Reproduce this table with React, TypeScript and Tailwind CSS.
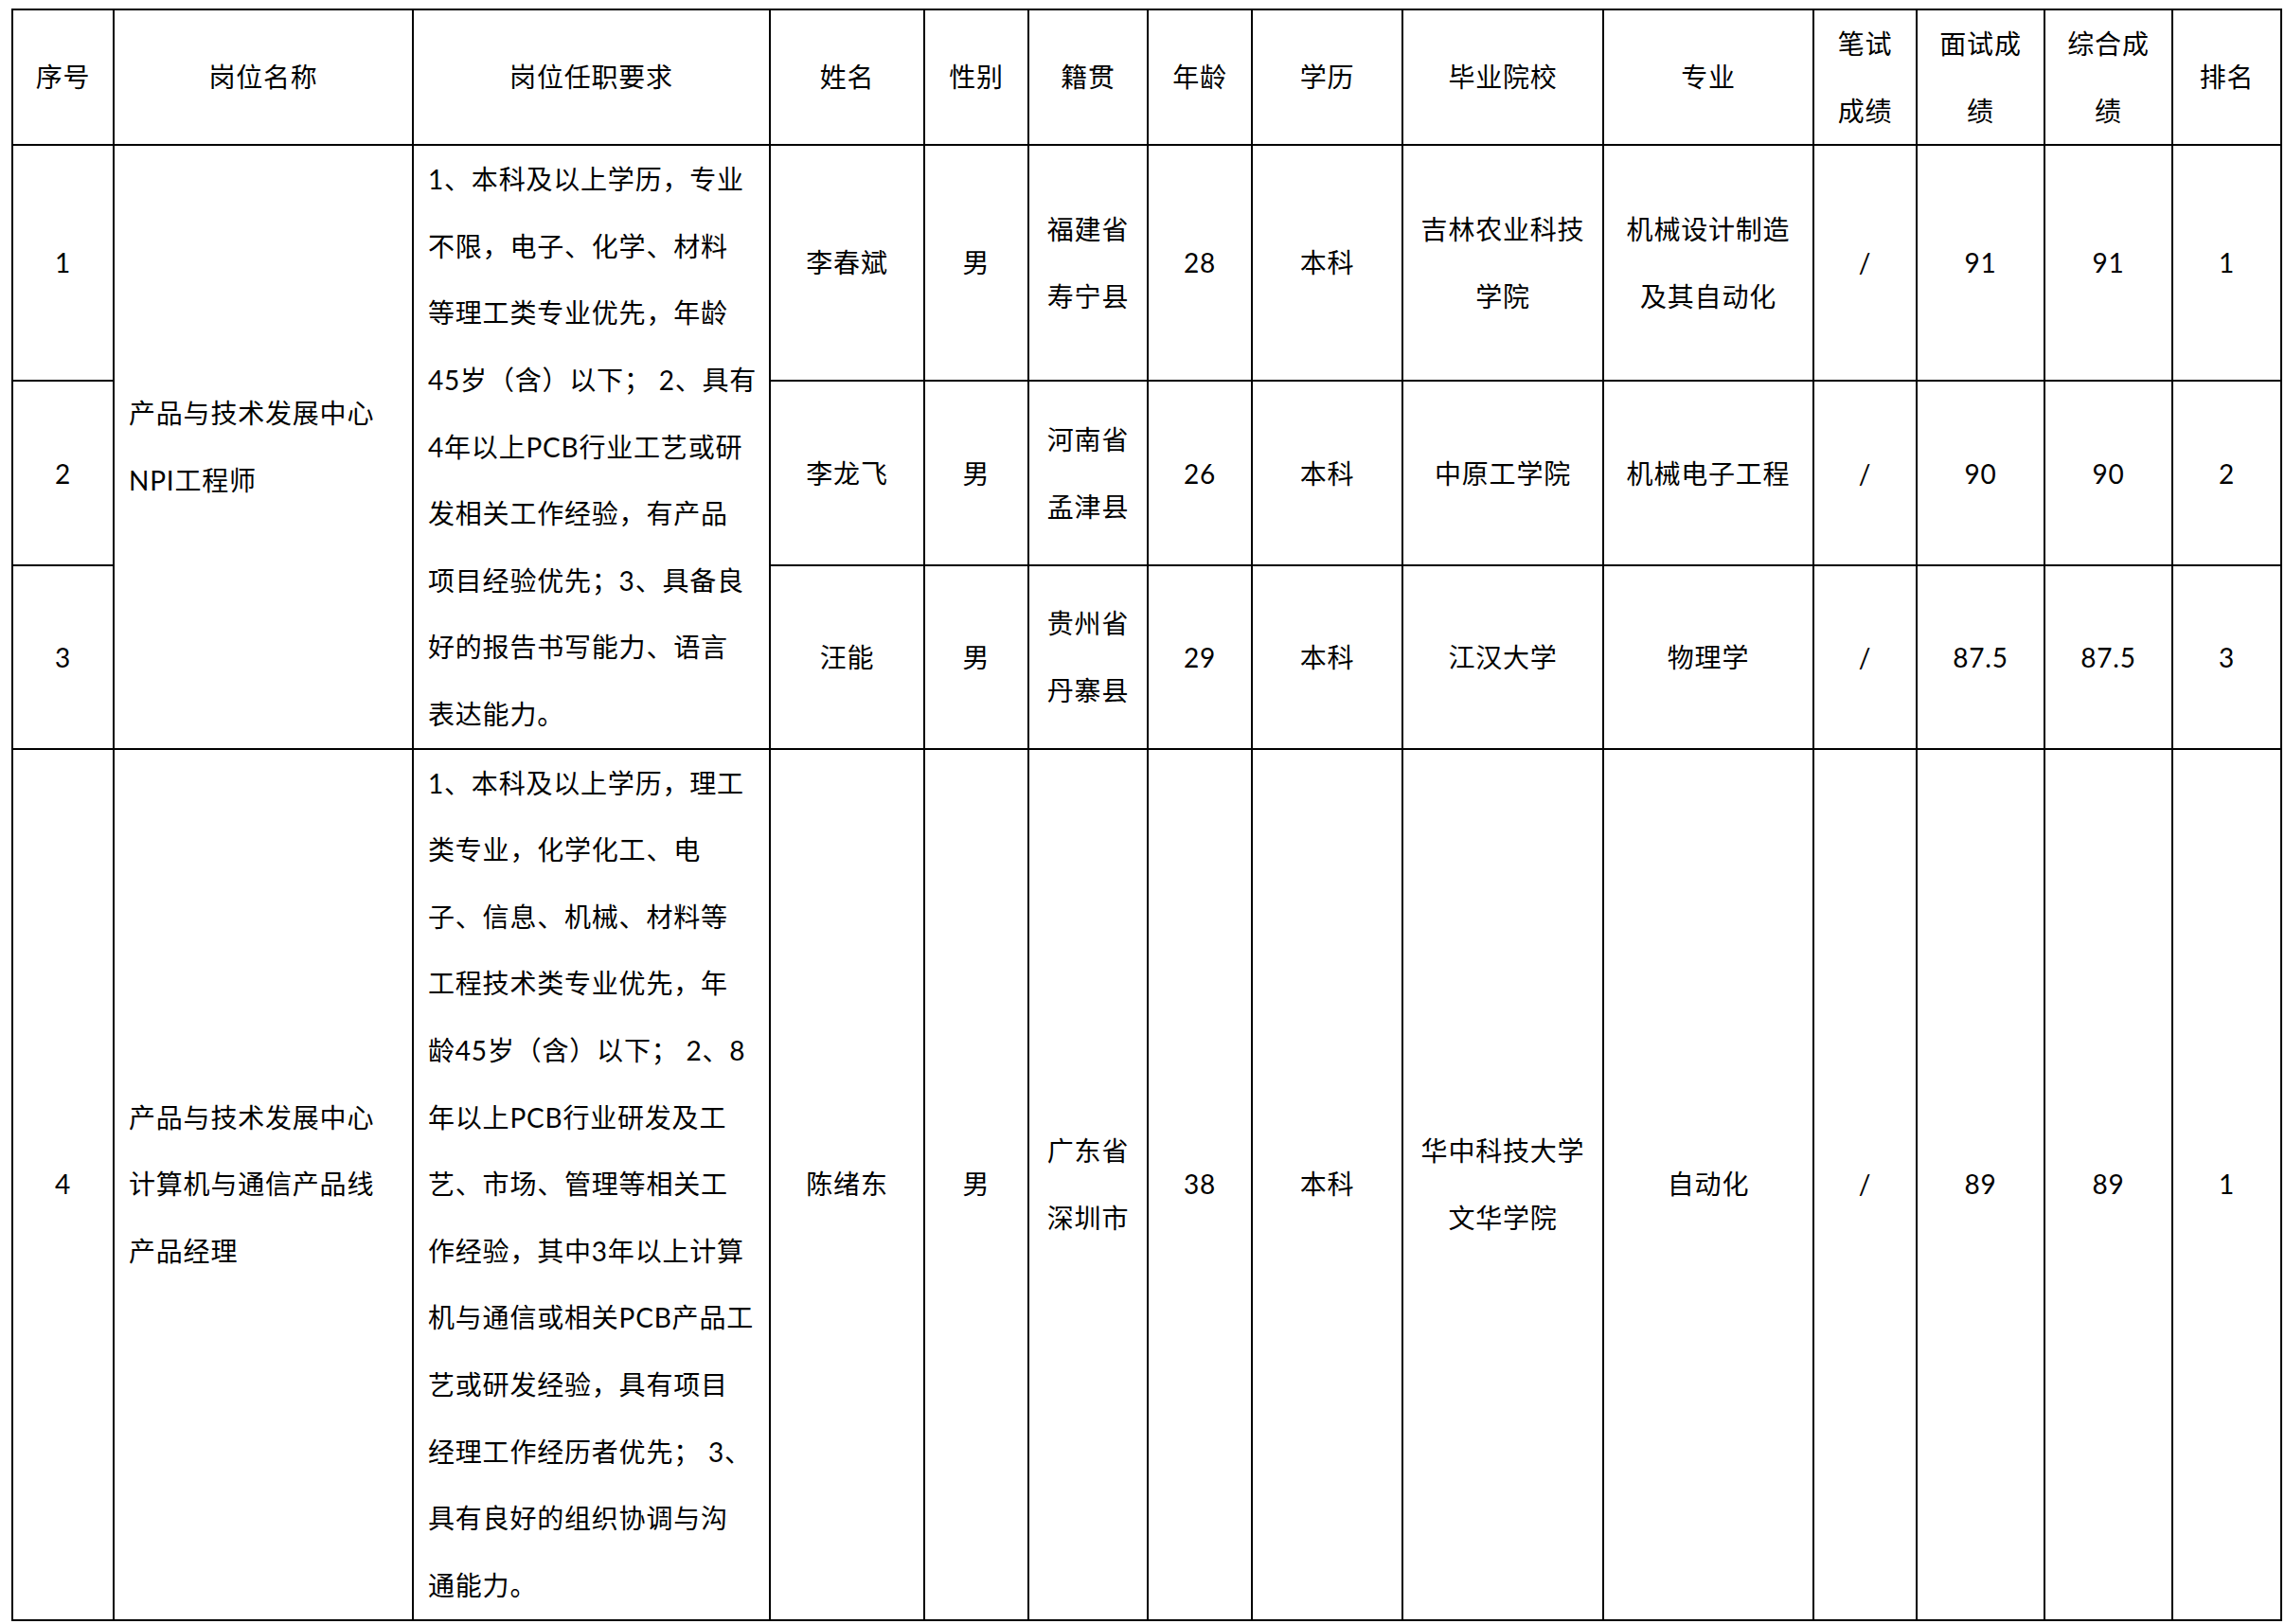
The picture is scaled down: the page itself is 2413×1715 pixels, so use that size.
import React from "react";

const td = "border-2 border-black px-[15px] py-0 text-center align-middle";
const tdl = "border-2 border-black pl-[15px] pr-[6px] py-0 text-left align-middle";

function Lines({ lines }: { lines: string[] }) {
  return (
    <>
      {lines.map((l, i) => (
        <div key={i} className="whitespace-nowrap">
          {l}
        </div>
      ))}
    </>
  );
}

const req1 = [
  "1、本科及以上学历，专业",
  "不限，电子、化学、材料",
  "等理工类专业优先，年龄",
  "45岁（含）以下； 2、具有",
  "4年以上PCB行业工艺或研",
  "发相关工作经验，有产品",
  "项目经验优先；3、具备良",
  "好的报告书写能力、语言",
  "表达能力。",
];

const req2 = [
  "1、本科及以上学历，理工",
  "类专业，化学化工、电",
  "子、信息、机械、材料等",
  "工程技术类专业优先，年",
  "龄45岁（含）以下； 2、8",
  "年以上PCB行业研发及工",
  "艺、市场、管理等相关工",
  "作经验，其中3年以上计算",
  "机与通信或相关PCB产品工",
  "艺或研发经验，具有项目",
  "经理工作经历者优先； 3、",
  "具有良好的组织协调与沟",
  "通能力。",
];

export default function App() {
  return (
    <div className="min-h-[1715px] w-[2413px] bg-white pt-[9px] pl-[12px] text-black font-['Lato','Noto_Sans_CJK_SC',sans-serif]">
      <table className="border-collapse table-fixed w-[2396px] text-[28px] leading-[70.6px] tracking-[0.8px]">
        <colgroup>
          <col className="w-[107px]" />
          <col className="w-[316px]" />
          <col className="w-[377px]" />
          <col className="w-[163px]" />
          <col className="w-[110px]" />
          <col className="w-[126px]" />
          <col className="w-[110px]" />
          <col className="w-[159px]" />
          <col className="w-[212px]" />
          <col className="w-[222px]" />
          <col className="w-[109px]" />
          <col className="w-[135px]" />
          <col className="w-[135px]" />
          <col className="w-[115px]" />
        </colgroup>
        <thead>
          <tr className="h-[142px]">
            <th className={td + " font-normal"}>序号</th>
            <th className={td + " font-normal"}>岗位名称</th>
            <th className={td + " font-normal"}>岗位任职要求</th>
            <th className={td + " font-normal"}>姓名</th>
            <th className={td + " font-normal"}>性别</th>
            <th className={td + " font-normal"}>籍贯</th>
            <th className={td + " font-normal"}>年龄</th>
            <th className={td + " font-normal"}>学历</th>
            <th className={td + " font-normal"}>毕业院校</th>
            <th className={td + " font-normal"}>专业</th>
            <th className={td + " font-normal px-0"}>
              <Lines lines={["笔试", "成绩"]} />
            </th>
            <th className={td + " font-normal px-0"}>
              <Lines lines={["面试成", "绩"]} />
            </th>
            <th className={td + " font-normal px-0"}>
              <Lines lines={["综合成", "绩"]} />
            </th>
            <th className={td + " font-normal"}>排名</th>
          </tr>
        </thead>
        <tbody>
          <tr className="h-[249px]">
            <td className={td}>1</td>
            <td className={tdl} rowSpan={3}>
              <Lines lines={["产品与技术发展中心", "NPI工程师"]} />
            </td>
            <td className={tdl} rowSpan={3}>
              <Lines lines={req1} />
            </td>
            <td className={td}>李春斌</td>
            <td className={td}>男</td>
            <td className={td + " px-0"}>
              <Lines lines={["福建省", "寿宁县"]} />
            </td>
            <td className={td}>28</td>
            <td className={td}>本科</td>
            <td className={td + " px-0"}>
              <Lines lines={["吉林农业科技", "学院"]} />
            </td>
            <td className={td + " px-0"}>
              <Lines lines={["机械设计制造", "及其自动化"]} />
            </td>
            <td className={td}>/</td>
            <td className={td}>91</td>
            <td className={td}>91</td>
            <td className={td}>1</td>
          </tr>
          <tr className="h-[195px]">
            <td className={td}>2</td>
            <td className={td}>李龙飞</td>
            <td className={td}>男</td>
            <td className={td + " px-0"}>
              <Lines lines={["河南省", "孟津县"]} />
            </td>
            <td className={td}>26</td>
            <td className={td}>本科</td>
            <td className={td + " px-0"}>中原工学院</td>
            <td className={td + " px-0"}>机械电子工程</td>
            <td className={td}>/</td>
            <td className={td}>90</td>
            <td className={td}>90</td>
            <td className={td}>2</td>
          </tr>
          <tr className="h-[193px]">
            <td className={td}>3</td>
            <td className={td}>汪能</td>
            <td className={td}>男</td>
            <td className={td + " px-0"}>
              <Lines lines={["贵州省", "丹寨县"]} />
            </td>
            <td className={td}>29</td>
            <td className={td}>本科</td>
            <td className={td + " px-0"}>江汉大学</td>
            <td className={td + " px-0"}>物理学</td>
            <td className={td}>/</td>
            <td className={td}>87.5</td>
            <td className={td}>87.5</td>
            <td className={td}>3</td>
          </tr>
          <tr className="h-[920px]">
            <td className={td}>4</td>
            <td className={tdl}>
              <Lines lines={["产品与技术发展中心", "计算机与通信产品线", "产品经理"]} />
            </td>
            <td className={tdl}>
              <Lines lines={req2} />
            </td>
            <td className={td}>陈绪东</td>
            <td className={td}>男</td>
            <td className={td + " px-0"}>
              <Lines lines={["广东省", "深圳市"]} />
            </td>
            <td className={td}>38</td>
            <td className={td}>本科</td>
            <td className={td + " px-0"}>
              <Lines lines={["华中科技大学", "文华学院"]} />
            </td>
            <td className={td + " px-0"}>自动化</td>
            <td className={td}>/</td>
            <td className={td}>89</td>
            <td className={td}>89</td>
            <td className={td}>1</td>
          </tr>
        </tbody>
      </table>
    </div>
  );
}
